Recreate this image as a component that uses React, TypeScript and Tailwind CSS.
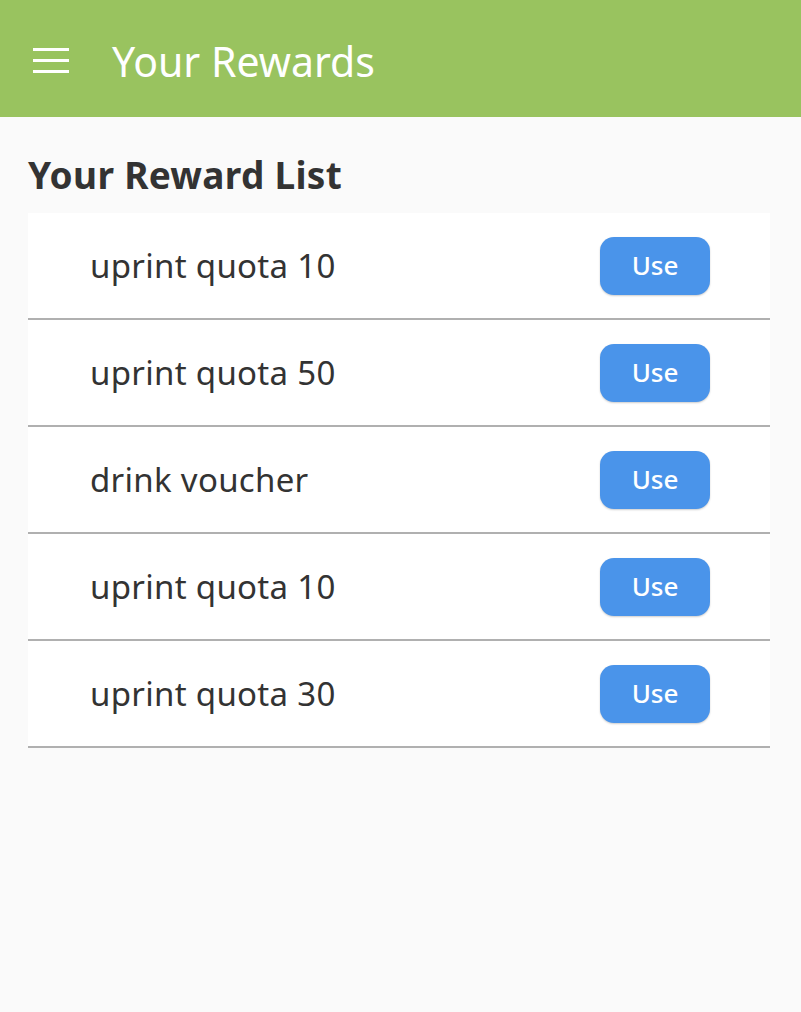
const rewards = [
  'uprint quota 10',
  'uprint quota 50',
  'drink voucher',
  'uprint quota 10',
  'uprint quota 30',
];

export default function App() {
  return (
    <div className="min-h-[1012px] w-[801px] bg-[#fafafa]" style={{ fontFamily: '"Noto Sans", sans-serif' }}>
      {/* App bar */}
      <div className="flex h-[117px] items-center bg-[#99c35f]">
        <div className="ml-[33px] flex w-[36px] flex-col gap-[8px] pt-[4px]">
          <div className="h-[3px] bg-white" />
          <div className="h-[3px] bg-white" />
          <div className="h-[3px] bg-white" />
        </div>
        <h1 className="ml-[43px] pt-[6px] text-[41px] leading-none text-white">Your Rewards</h1>
      </div>

      <div className="px-[28px] pt-[36px]">
        <h2 className="mb-[16px] text-[37px] font-bold leading-[44px] tracking-[0.3px] text-[#333333]">Your Reward List</h2>
        <ul className="w-[742px]">
          {rewards.map((name, i) => (
            <li key={i} className="flex h-[107px] items-center justify-between border-b-2 border-[#b0b0b0] bg-white pl-[62px] pr-[60px]">
              <span className="text-[33px] tracking-[0.3px] text-[#333333]">{name}</span>
              <button className="h-[58px] w-[110px] rounded-[14px] bg-[#4a94ea] text-[26px] font-medium text-white shadow-[0_1px_2px_rgba(0,0,0,0.2)]">
                Use
              </button>
            </li>
          ))}
        </ul>
      </div>
    </div>
  );
}
